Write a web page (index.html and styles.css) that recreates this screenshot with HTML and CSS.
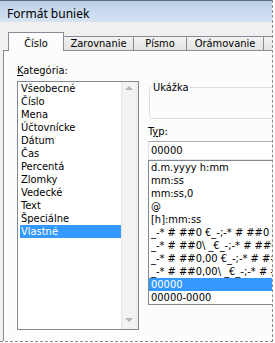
FILE: index.html
```html
<!DOCTYPE html>
<html lang="sk">
<head>
    <meta charset="UTF-8">
    <meta name="viewport" content="width=device-width, initial-scale=1.0">
    <title>Formát buniek</title>
    <link rel="stylesheet" href="styles.css">
</head>
<body>
    <div class="crop">
        <div class="dialog">
            <div class="titlebar">Formát buniek</div>

            <div class="tabs">
                <div class="tab active tab-cislo">Číslo</div>
                <div class="tab tab-zarovnanie">Zarovnanie</div>
                <div class="tab tab-pismo">Písmo</div>
                <div class="tab tab-oramovanie">Orámovanie</div>
                <div class="tab tab-vypln"></div>
            </div>

            <div class="panel">
                <div class="col-left">
                    <div class="label"><u>K</u>ategória:</div>
                    <div class="listbox categories">
                        <ul class="items">
                            <li>Všeobecné</li>
                            <li>Číslo</li>
                            <li>Mena</li>
                            <li>Účtovnícke</li>
                            <li>Dátum</li>
                            <li>Čas</li>
                            <li>Percentá</li>
                            <li>Zlomky</li>
                            <li>Vedecké</li>
                            <li>Text</li>
                            <li>Špeciálne</li>
                            <li class="selected">Vlastné</li>
                        </ul>
                        <div class="scrollbar">
                            <span class="arrow up"></span>
                            <span class="arrow down"></span>
                        </div>
                    </div>
                </div>

                <div class="col-right">
                    <div class="sample">
                        <div class="sample-title">Ukážka</div>
                    </div>
                    <div class="label typ">T<u>y</u>p:</div>
                    <div class="textbox">00000</div>
                    <ul class="listbox formats">
                        <li>d.m.yyyy h:mm</li>
                        <li>mm:ss</li>
                        <li>mm:ss,0</li>
                        <li>@</li>
                        <li>[h]:mm:ss</li>
                        <li>_-* # ##0 €_-;-* # ##0 €_-;_-* "-" €_-;_-@_-</li>
                        <li>_-* # ##0\ _€_-;-* # ##0\ _€_-;_-* "-"\ _€_-;_-@_-</li>
                        <li>_-* # ##0,00 €_-;-* # ##0,00 €_-;_-* "-"?? €_-;_-@_-</li>
                        <li>_-* # ##0,00\ _€_-;-* # ##0,00\ _€_-;_-* "-"??\ _€_-;_-@_-</li>
                        <li class="selected">00000</li>
                        <li>00000-0000</li>
                    </ul>
                </div>
            </div>
        </div>
    </div>
</body>
</html>
```

FILE: styles.css
```css
body {
    margin: 0;
    background: #fff;
    font-family: "DejaVu Sans Condensed", Roboto, sans-serif;
    font-size: 11px;
    color: #000;
}
.crop {
    width: 272px;
    height: 341px;
    overflow: hidden;
    border-right: 1px dashed #8a8a8a;
    border-bottom: 1px dashed #8a8a8a;
}
.dialog {
    height: 100%;
    background: #f0f0f0;
}
.titlebar {
    height: 16px;
    padding-top: 5px;
    padding-left: 7px;
    border-top: 1px solid #5d6d82;
    background: linear-gradient(#bccfe8, #d6e3f2);
    font-family: "Noto Sans", sans-serif;
    font-size: 12px;
    line-height: 16px;
}
.tabs {
    display: flex;
    align-items: flex-end;
    margin-top: 10px;
    padding-left: 8px;
    height: 18px;
    white-space: nowrap;
}
.tab {
    flex: none;
    box-sizing: border-box;
    height: 14px;
    line-height: 12px;
    padding-top: 1px;
    text-align: center;
    border: 1px solid #898c95;
    border-bottom: none;
    margin-left: -1px;
    background: linear-gradient(#f2f2f2, #e3e3e3);
    overflow: hidden;
}
.tab.active {
    position: relative;
    z-index: 1;
    height: 19px;
    margin-bottom: -1px;
    margin-left: 0;
    padding-top: 4px;
    line-height: 14px;
    background: #fcfcfc;
}
.tab-cislo { width: 56px; }
.tab-zarovnanie { width: 71px; }
.tab-pismo { width: 54px; }
.tab-oramovanie { width: 78px; }
.tab-vypln { width: 60px; }

.panel {
    display: flex;
    gap: 9px;
    margin-left: 3px;
    width: 300px;
    height: 300px;
    border: 1px solid #898c95;
    background: #fcfcfc;
    padding-left: 13px;
}
.label {
    line-height: 13px;
}
.col-left {
    width: 122px;
    padding-top: 13px;
}
.col-left .label {
    margin-bottom: 4px;
}
.listbox {
    margin: 0;
    padding: 0;
    list-style: none;
    background: #fff;
    border: 1px solid #828790;
}
.listbox li {
    height: 13px;
    line-height: 13px;
    white-space: nowrap;
}
.listbox li.selected {
    background: #3399ff;
    color: #fff;
}
.categories {
    display: flex;
    height: 247px;
    padding-left: 2px;
}
.items {
    margin: 0;
    padding: 0;
    list-style: none;
    width: 101px;
}
.items li {
    padding-left: 1px;
}
.scrollbar {
    width: 17px;
    position: relative;
    background: linear-gradient(to right, #e4e4e4, #f3f3f3 2px, #f3f3f3 14px, #ebebeb);
}
.arrow {
    position: absolute;
    left: 4px;
    width: 0;
    height: 0;
    border-left: 4px solid transparent;
    border-right: 4px solid transparent;
}
.arrow.up {
    top: 4px;
    border-bottom: 4px solid #b5b5b5;
}
.arrow.down {
    bottom: 7px;
    border-top: 4px solid #b5b5b5;
}
.col-right {
    flex: 1;
    padding-top: 36px;
}
.sample {
    margin-left: 1px;
    height: 30px;
    border: 1px solid #d5dfe5;
    border-radius: 3px;
}
.sample-title {
    width: fit-content;
    margin: -7px 0 0 2px;
    padding: 0 1px;
    line-height: 13px;
    background: #fcfcfc;
}
.typ {
    margin-top: 6px;
    margin-bottom: 3px;
}
.textbox {
    height: 16px;
    line-height: 16px;
    padding: 1px 0 0 2px;
    border: 1px solid #abadb3;
    border-color: #abadb3 #dbdfe6 #e3e9ef #e2e3ea;
    background: #fff;
}
.formats li {
    padding-left: 2px;
}
```
